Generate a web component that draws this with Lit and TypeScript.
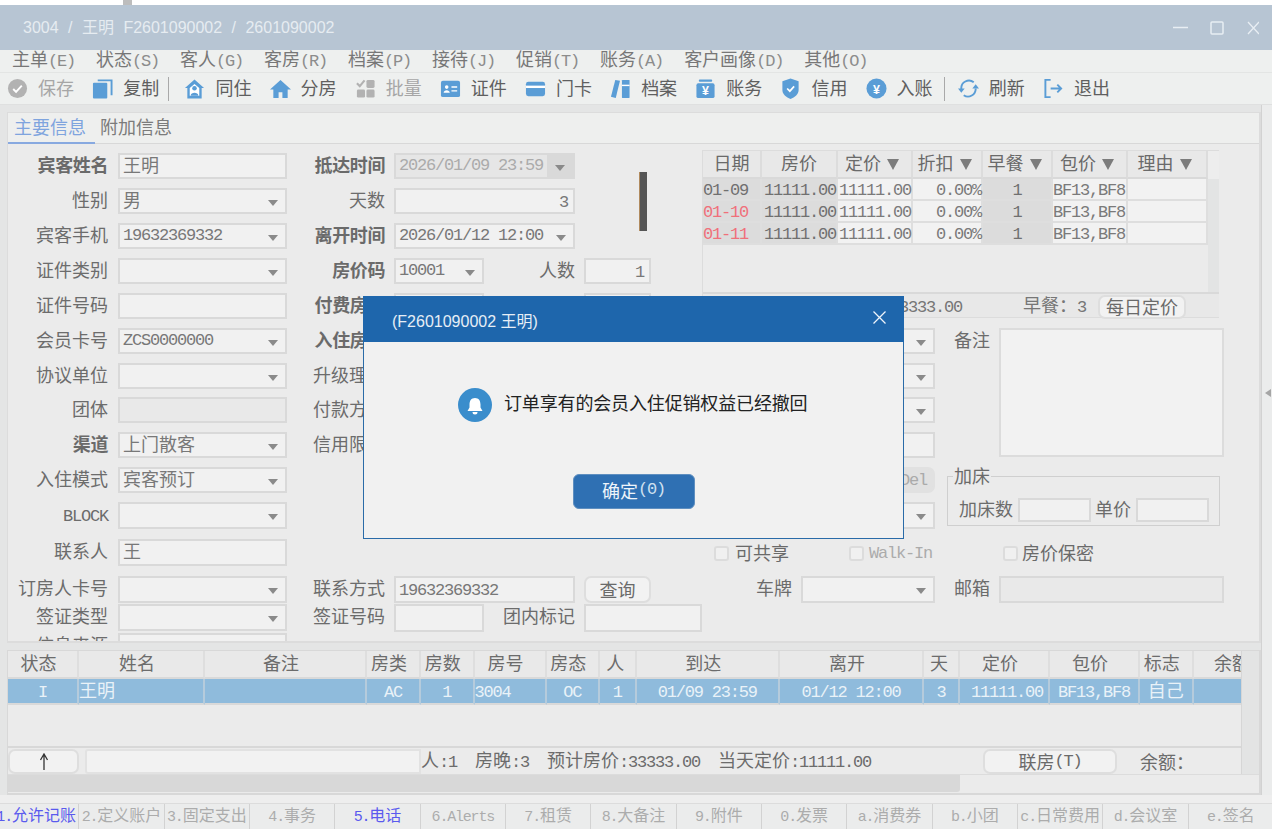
import { LitElement, html, css } from "lit";
import { customElement } from "lit/decorators.js";

const t = (s: string) =>
  s
    .split(/([\x20-\x7e]+)/)
    .filter(Boolean)
    .map((p) => (/^[\x20-\x7e]/.test(p) ? html`<span class="m">${p}</span>` : p));

const lbl = (s: string, b = false) => html`<span class="lb ${b ? "b" : ""}">${t(s)}</span>`;
const inp = (s = "", cls = "") => html`<div class="f ${cls}">${t(s)}</div>`;
const sel = (s = "", cls = "") => html`<div class="f sel ${cls}"><span class="v">${t(s)}</span><i class="ar"></i></div>`;

const B = "#5a9dd6";
const G = "#b2b2b2";
const icons: Record<string, unknown> = {
  save: html`<svg viewBox="0 0 22 22"><circle cx="11" cy="11" r="10" fill="${G}"/><path d="M6.5 11.5l3 3 6-6.5" fill="none" stroke="#fff" stroke-width="2"/></svg>`,
  copy: html`<svg viewBox="0 0 22 22"><path d="M6 2.5h14.500V18" fill="none" stroke="${B}" stroke-width="2"/><rect x="1" y="5" width="15" height="16.500" rx="1" fill="${B}"/></svg>`,
  share: html`<svg viewBox="0 0 22 22"><path d="M11 1.500l10 9h-2.500v11h-15v-11H1z" fill="${B}"/><path d="M6 10.500l5-4.200 5 4.200V18.500H6z" fill="#fff"/><circle cx="11" cy="10.800" r="2.400" fill="${B}"/><path d="M7 18.500c0-4 8-4 8 0z" fill="${B}"/></svg>`,
  home: html`<svg viewBox="0 0 22 22"><path d="M11 2L22 12h-3.500v9H13v-6H9v6H3.500v-9H0z" fill="${B}"/></svg>`,
  batch: html`<svg viewBox="0 0 22 22"><path d="M2 5.500l3 3 5-6" fill="none" stroke="${G}" stroke-width="2.200"/><rect x="12" y="2" width="8.500" height="8.500" rx="1.500" fill="${G}"/><rect x="2" y="12" width="8.500" height="8.500" rx="1.500" fill="${G}"/><rect x="12" y="12" width="8.500" height="8.500" rx="1.500" fill="${G}"/></svg>`,
  id: html`<svg viewBox="0 0 22 22"><rect x="1" y="3" width="20" height="17" rx="2" fill="${B}"/><circle cx="7" cy="9.500" r="1.900" fill="#fff"/><path d="M3.800 15.500c0-3.500 6.400-3.500 6.400 0z" fill="#fff"/><path d="M12 9.500h6M12 13.500h6" stroke="#fff" stroke-width="1.500"/></svg>`,
  card: html`<svg viewBox="0 0 22 22"><rect x="1" y="4" width="20" height="15" rx="2.500" fill="${B}"/><rect x="1" y="8" width="20" height="2.500" fill="#fff"/></svg>`,
  books: html`<svg viewBox="0 0 22 22"><path d="M5.500 2l5 1L6 21l-5-1.300z" fill="${B}"/><rect x="12.500" y="2" width="8" height="19" rx=".5" fill="${B}"/><rect x="12.500" y="7" width="8" height="1.500" fill="#fff"/></svg>`,
  jar: html`<svg viewBox="0 0 22 22"><rect x="4" y="1.500" width="14" height="2.500" rx="1" fill="${B}"/><rect x="1.500" y="5.500" width="19" height="15.500" rx="2" fill="${B}"/><text x="11" y="17.500" class="yen">¥</text></svg>`,
  shield: html`<svg viewBox="0 0 22 22"><path d="M11 .5l8.500 3v9c0 4.500-4 7.500-8.500 9.500-4.500-2-8.500-5-8.500-9.500v-9z" fill="${B}"/><path d="M7.500 11l2.800 2.800 4.500-5" fill="none" stroke="#fff" stroke-width="1.800"/></svg>`,
  coin: html`<svg viewBox="0 0 22 22"><circle cx="11" cy="11" r="10.500" fill="${B}"/><text x="11" y="16.500" class="yen">¥</text></svg>`,
  refresh: html`<svg viewBox="0 0 22 22"><path d="M3.500 11.500A8 8 0 0 1 16.500 4.500M18.500 11A8 8 0 0 1 6 18" fill="none" stroke="${B}" stroke-width="2"/><path d="M0 11h7l-3.500 4.500zM15 11h7l-3.500-4.500z" fill="${B}"/></svg>`,
  exit: html`<svg viewBox="0 0 22 22"><path d="M8 2H2.500v18H8" fill="none" stroke="${B}" stroke-width="2"/><path d="M8 11h11M15 7l4 4-4 4" fill="none" stroke="${B}" stroke-width="2"/></svg>`,
};

const menus = ["主单(E)", "状态(S)", "客人(G)", "客房(R)", "档案(P)", "接待(J)", "促销(T)", "账务(A)", "客户画像(D)", "其他(O)"];

const tools: [string, string, string?][] = [
  ["save", "保存", "off"],
  ["copy", "复制", "s1"],
  ["share", "同住"],
  ["home", "分房"],
  ["batch", "批量", "off"],
  ["id", "证件"],
  ["card", "门卡"],
  ["books", "档案"],
  ["jar", "账务"],
  ["shield", "信用"],
  ["coin", "入账", "s2"],
  ["refresh", "刷新"],
  ["exit", "退出"],
];

const rateRows = [
  ["01-09", false],
  ["01-10", true],
  ["01-11", true],
] as [string, boolean][];

const gridHead = ["状态", "姓名", "备注", "房类", "房数", "房号", "房态", "人", "到达", "离开", "天", "定价", "包价", "标志", "余额"];
const gridRow: [string, string?][] = [
  ["I"],
  ["王明", "l"],
  [""],
  ["AC"],
  ["1"],
  ["3004", "l"],
  ["OC"],
  ["1"],
  ["01/09 23:59"],
  ["01/12 12:00"],
  ["3"],
  ["11111.00", "r"],
  ["BF13,BF8"],
  ["自己"],
  [""],
];

const bottom: [string, boolean][] = [
  ["1.允许记账", true],
  ["2.定义账户", false],
  ["3.固定支出", false],
  ["4.事务", false],
  ["5.电话", true],
  ["6.Alerts", false],
  ["7.租赁", false],
  ["8.大备注", false],
  ["9.附件", false],
  ["0.发票", false],
  ["a.消费券", false],
  ["b.小团", false],
  ["c.日常费用", false],
  ["d.会议室", false],
  ["e.签名", false],
];

@customElement("app-root")
export class AppRoot extends LitElement {
  static styles = css`
    :host {
      display: block;
      width: 1272px;
      height: 829px;
      overflow: hidden;
      background: #e4e5e5;
      color: #6c6c6c;
      font-family: "Noto Sans CJK SC", "Liberation Sans", sans-serif;
      font-size: 18px;
      line-height: 26px;
    }
    * { box-sizing: border-box; }
    .m {
      font-family: "Liberation Mono", monospace;
      font-size: 17px;
      letter-spacing: -1.2px;
      white-space: pre;
    }
    .top { height: 5px; background: #fff; }
    .top i { display: block; margin-left: 123px; width: 9px; height: 5px; background: #bdbdbd; }
    .title {
      height: 45px;
      background: #b7c5d3;
      color: #e6ecf1;
      display: flex;
      align-items: center;
      justify-content: space-between;
      padding: 0 13px 0 23px;
      font-family: "Liberation Sans", "Noto Sans CJK SC", sans-serif;
      font-size: 16px;
      word-spacing: 5px;
      white-space: pre;
    }
    .title svg { width: 86px; height: 14px; }
    .menu {
      height: 22px;
      background: #eef0ef;
      display: flex;
      gap: 21px;
      padding-left: 12px;
      line-height: 16px;
      color: #777;
      white-space: nowrap;
    }
    .menu .m { color: #8c8c8c; }
    .tools {
      height: 33px;
      background: #eef0ef;
      border-top: 1px solid #e3e5e4;
      border-bottom: 1px solid #dfe0e0;
      display: flex;
      align-items: center;
      gap: 17.15px;
      padding-left: 7px;
      white-space: nowrap;
      color: #5f5f5f;
    }
    .tool { display: flex; align-items: center; gap: 10px; width: 68px; }
    .tool svg { width: 21px; height: 21px; flex: none; }
    .tool span { margin-top: -4px; }
    .tool.off { color: #a6a6a6; }
    .yen { fill: #fff; font: 700 13px "Liberation Sans", sans-serif; text-anchor: middle; }
    .sep { width: 1px; height: 24px; background: #a9a9a9; }
    .sep.a { margin: 0 -2px 0 -9px; }
    .sep.b { margin: 0 -4px 0 -7px; }

    .body { height: 690px; display: flex; }
    .panels { width: 1261px; padding: 7px 0 0 7px; }
    .strip {
      width: 11px;
      background: #ebecec;
      border-left: 1px solid #d2d2d2;
      display: flex;
      align-items: center;
      padding-bottom: 115px;
      padding-left: 3px;
    }
    .strip i {
      width: 0;
      height: 0;
      border-style: solid;
      border-width: 4px 6px 4px 0;
      border-color: transparent #a5a5a5 transparent transparent;
    }
    .main {
      height: 531px;
      background: #ebebeb;
      border: 1px solid #dcdcdc;
      border-bottom-width: 2px;
      border-right-width: 2px;
      overflow: hidden;
    }
    .tabs {
      height: 31px;
      display: flex;
      border-bottom: 1px solid #d8d8d8;
      background: #eeefee;
      line-height: 27px;
    }
    .tab { padding: 0 5px; color: #7b7b7b; white-space: nowrap; }
    .tab.on { color: #7fa4de; border-bottom: 2px solid #88a9e0; height: 31px; padding: 0 9px 0 6px; }
    .form { height: 497px; display: flex; overflow: hidden; }
    .col1 { width: 279px; flex: none; padding-top: 9px; }
    .col2 { width: 415px; flex: none; padding-top: 9px; }
    .col3 { flex: 1; padding-top: 6px; }

    .row { height: 35px; display: flex; align-items: flex-start; gap: 9px; }
    .row.h34 { height: 34px; }
    .row.h37 { height: 37px; }
    .row.h28 { height: 28px; }
    .row.h29 { height: 29px; }
    .row.tall .f { height: 27px; }
    .row.tall2 .f { height: 28px; }
    .col1 .row { gap: 10px; }
    .col1 .lb { width: 100px; }
    .col2 .lb.first { width: 98px; }
    .lb { text-align: right; flex: none; white-space: nowrap; line-height: 23px; }
    .lb.b { font-weight: 700; color: #6a6a6a; letter-spacing: -0.4px; }
    .lb.m2 { width: 91px; margin-left: -9px; }
    .f {
      height: 26px;
      background: #f1f1f1;
      border: 2px solid #d9d9d9;
      color: #787878;
      padding: 0 3px;
      line-height: 18px;
      white-space: nowrap;
      flex: none;
    }
    .w169 { width: 169px; }
    .w181 { width: 181px; }
    .w90 { width: 90px; }
    .w67 { width: 67px; }
    .w118 { width: 118px; }
    .w134 { width: 134px; }
    .w225 { width: 225px; }
    .w73 { width: 73px; }
    .r { text-align: right; padding-right: 5px; }
    .dis { background: #e9e9e9; }
    .sel { display: flex; align-items: center; justify-content: space-between; padding-right: 7px; }
    .sel .v { margin-top: -4px; }
    .ar {
      width: 0;
      height: 0;
      flex: none;
      margin-top: 3px;
      border-style: solid;
      border-width: 6px 5.5px 0 5.5px;
      border-color: #8a8a8a transparent transparent transparent;
    }
    .date { background: #e6e6e6; color: #ababab; padding-right: 0; }
    .date .cap {
      width: 26px;
      height: 22px;
      background: #d9d9d9;
      display: flex;
      align-items: center;
      justify-content: center;
    }
    .bar { width: 8px; height: 59px; background: #555; margin: 19px 0 0 55px; flex: none; border-left: 1px solid #b08a5e; }

    .rate { width: 517px; height: 168px; border: 1px solid #dcdcdc; border-right: none; display: flex; flex-direction: column; }
    .rate-top { flex: 1; display: flex; }
    .rate-main { width: 505px; }
    .rate-sb { width: 12px; display: flex; flex-direction: column; }
    .rate-sb i { display: block; height: 28px; background: #ededed; }
    .rate-sb b { display: block; flex: 1; background: #e3e4e4; }
    .rtr { display: grid; grid-template-columns: 59px 76px 75px 70px 70px 75px 80px; }
    .rth {
      height: 28px;
      background: #e8e8e8;
      border-right: 2px solid #dcdcdc;
      border-bottom: 2px solid #d9d9d9;
      display: flex;
      align-items: center;
      justify-content: center;
      gap: 6px;
      color: #6a6a6a;
      line-height: 21px;
    }
    .rth.fl { padding-right: 5px; }
    .rth span { margin-top: -3px; }
    .fil {
      width: 0;
      height: 0;
      border-style: solid;
      border-width: 11px 6.5px 0 6.5px;
      border-color: #7c7c7c transparent transparent transparent;
    }
    .rtd {
      height: 22px;
      background: #f2f2f2;
      border-right: 2px solid #dedede;
      border-bottom: 2px solid #dedede;
      line-height: 17px;
      color: #7a7a7a;
      white-space: nowrap;
      text-align: center;
    }
    .rtd.g { background: #dcdcdc; color: #707070; }
    .rtd.red { color: #f0707a; }
    .rtd.ra { text-align: right; }
    .rtd.la { text-align: left; }
    .rate-foot {
      height: 25px;
      border-top: 2px solid #d9d9d9;
      display: flex;
      align-items: center;
      justify-content: flex-end;
      padding-right: 33px;
      white-space: nowrap;
      background: #e8e8e8;
      color: #767676;
    }
    .btn {
      background: #f2f2f2;
      border: 2px solid #dedede;
      border-radius: 7px;
      display: flex;
      align-items: center;
      justify-content: center;
      flex: none;
      color: #6a6a6a;
      line-height: 19px;
      white-space: nowrap;
    }
    .btn27 { height: 27px; }
    .rate-foot .btn { width: 88px; height: 24px; margin: 2px 0 0 12px; }
    .rate-foot .val { margin-right: 61px; }

    .lower { display: flex; margin-top: 10px; gap: 12px; }
    .ll { width: 233px; flex: none; }
    .ll .row { justify-content: flex-end; }
    .ll .row.start { justify-content: flex-start; padding: 7px 0 0 12px; gap: 6px; }
    .rl { width: 277px; flex: none; }
    .rl .row { padding-left: 7px; }
    .rl .row.ckr { padding-top: 7px; gap: 4px; }
    .h139 { height: 139px !important; }
    .ta { width: 225px; height: 129px; background: #f2f2f2; border: 2px solid #dcdcdc; flex: none; }
    .del { background: #e1e1e1; border-color: #e1e1e1; color: #aaa; width: 134px; height: 26px; justify-content: flex-end; padding-right: 6px; }
    .rl .fsw { height: 72px; }
    fieldset {
      margin: 0 0 0 -7px;
      width: 273px;
      height: 59px;
      border: 1px solid #cfcfcf;
      padding: 13px 0 0 11px;
      display: flex;
      gap: 5px;
      align-items: flex-start;
    }
    legend { padding: 0 1px; margin-left: -6px; line-height: 16px; height: 18px; color: #6a6a6a; }
    .fs { display: flex; gap: 5px; height: 24px; line-height: 21px; }
    .fs .f { height: 24px; }
    .fs .sp { margin-left: -1px; }
    .ck { width: 15px; height: 15px; background: #f0f0f0; border: 2px solid #dcdcdc; border-radius: 3px; flex: none; }
    .cktxt { line-height: 12px; white-space: nowrap; color: #6a6a6a; }
    .cktxt.off { color: #ababab; margin-left: -1px; line-height: 9px; }
    .sp60 { margin-left: 54px; }
    .ml49 { margin-left: 49px; }

    .grid {
      margin-top: 7px;
      height: 145px;
      border: 1px solid #d8d8d8;
      border-bottom-width: 2px;
      border-right-width: 2px;
      background: #ebebeb;
    }
    .g-up { display: flex; height: 123px; }
    .g-main { width: 1233px; flex: none; overflow-x: clip; }
    .g-sb { width: 18px; background: #e3e4e4; border-left: 1px solid #d6d6d6; }
    .gtr { display: grid; width: 1264px; grid-template-columns: 71px 126px 162px 54px 53.5px 72px 53.500px 36.500px 143.500px 144px 36px 90px 90px 53.500px 79px; }
    .gth {
      height: 28px;
      background: #e9e9e9;
      border-right: 2px solid #dedede;
      border-bottom: 2px solid #d9d9d9;
      line-height: 22px;
      text-align: center;
      white-space: nowrap;
      padding-right: 8px;
    }
    .gtr .gth:nth-child(8), .gtr .gth:nth-child(11) { padding-right: 4px; }
    .gtr .gth:nth-child(15) { padding-right: 0; }
    .gtd {
      height: 26px;
      background: #8fbbdc;
      color: #e9f2f8;
      border-right: 2px solid #b5cbdc;
      border-bottom: 2px solid #d9d9d9;
      line-height: 21px;
      text-align: center;
      white-space: nowrap;
    }
    .gtd.l { text-align: left; }
    .gtd.r { text-align: right; }
    .g-blank { height: 43px; border-bottom: 2px solid #d8d8d8; }
    .g-bar { height: 26px; display: flex; align-items: center; white-space: nowrap; color: #6c6c6c; line-height: 23px; }
    .g-bar .up { width: 71px; height: 25px; }
    .g-bar .up svg { width: 12px; height: 17px; }
    .g-bar .box { width: 336px; height: 25px; margin: 0 0 0 6px; background: #f2f2f2; border: 2px solid #e2e2e2; border-radius: 3px 0 0 3px; }
    .stats { display: flex; gap: 18px; }
    .g-bar .join { width: 134px; height: 25px; margin-left: 112px; }
    .g-bar .bal { margin-left: 23px; }
    .hs { height: 18px; display: flex; border-top: 1px solid #dcdcdc; }
    .hs i { display: block; width: 952px; background: #d8d8d8; border-radius: 0 0 3px 0; }
    .band { height: 8px; background: #eeeeee; }
    .btabs {
      height: 26px;
      width: 1280px;
      margin-left: -6px;
      display: grid;
      grid-template-columns: repeat(15, 1fr);
      background: #ebecec;
      border-top: 1px solid #dcdcdc;
    }
    .bt {
      border-right: 1px solid #d2d2d2;
      font-size: 16px;
      line-height: 21px;
      text-align: center;
      color: #acacac;
      white-space: nowrap;
    }
    .bt.on { color: #5a5aee; }
    .bt .m { font-size: 15px; }

    .dialog {
      position: absolute;
      left: 363px;
      top: 296px;
      width: 541px;
      height: 243px;
      background: #f1f1f1;
      border: 1px solid #2a6ba8;
      border-top: none;
      display: flex;
      flex-direction: column;
    }
    .d-h {
      height: 46px;
      margin: 0 -1px;
      flex: none;
      background: #1e66ac;
      color: #e6eef6;
      display: flex;
      align-items: center;
      justify-content: space-between;
      padding: 6px 18px 0 29px;
      font-family: "Liberation Sans", "Noto Sans CJK SC", sans-serif;
      font-size: 16px;
      white-space: pre;
    }
    .d-h svg { width: 13px; height: 13px; margin-bottom: 10px; }
    .d-m {
      display: flex;
      align-items: center;
      gap: 12px;
      margin: 46px 0 0 94px;
      height: 34px;
      color: #222;
      white-space: nowrap;
    }
    .d-m svg { width: 34px; height: 34px; flex: none; }
    .d-m span.tx { margin-top: -6px; letter-spacing: -0.15px; }
    .d-b {
      margin: 52px auto 0;
      width: 122px;
      height: 35px;
      background: #2f70b3;
      border: 1px solid #5f8fc0;
      border-radius: 6px;
      color: #eef4fa;
      display: flex;
      align-items: center;
      justify-content: center;
      padding-bottom: 3px;
    }
    .d-b .m { color: #cfe0f0; }
    .root { position: relative; width: 1272px; height: 829px; overflow: hidden; }
  `;

  render() {
    return html`<div class="root">
      <div class="top"><i></i></div>
      <div class="title">
        <span>3004 / 王明 F2601090002 / 2601090002</span>
        <svg viewBox="0 0 86 14"><path d="M0 6.500h15" stroke="#e8eef3" stroke-width="1.500"/><rect x="38" y="1" width="12" height="12" rx="1" fill="none" stroke="#e8eef3" stroke-width="1.500"/><path d="M75 1l11 12M86 1L75 13" stroke="#e8eef3" stroke-width="1.300"/></svg>
      </div>
      <div class="menu">${menus.map((m) => html`<span>${t(m)}</span>`)}</div>
      <div class="tools">
        ${tools.map(
          ([i, l, c]) => html`<div class="tool ${c === "off" ? "off" : ""}">${icons[i]}<span>${l}</span></div>
            ${c === "s1" ? html`<div class="sep a"></div>` : ""}${c === "s2" ? html`<div class="sep b"></div>` : ""}`
        )}
      </div>
      <div class="body">
        <div class="panels">
          <div class="main">
            <div class="tabs"><div class="tab on">主要信息</div><div class="tab">附加信息</div></div>
            <div class="form">
              <div class="col1">
                <div class="row">${lbl("宾客姓名", true)}${inp("王明", "w169")}</div>
                <div class="row">${lbl("性别")}${sel("男", "w169")}</div>
                <div class="row">${lbl("宾客手机")}${sel("19632369332", "w169")}</div>
                <div class="row">${lbl("证件类别")}${sel("", "w169")}</div>
                <div class="row">${lbl("证件号码")}${inp("", "w169")}</div>
                <div class="row">${lbl("会员卡号")}${sel("ZCS0000000", "w169")}</div>
                <div class="row h34">${lbl("协议单位")}${sel("", "w169")}</div>
                <div class="row">${lbl("团体")}${inp("", "w169 dis")}</div>
                <div class="row">${lbl("渠道", true)}${sel("上门散客", "w169")}</div>
                <div class="row">${lbl("入住模式")}${sel("宾客预订", "w169")}</div>
                <div class="row h37 tall">${lbl("BLOCK")}${sel("", "w169")}</div>
                <div class="row h37 tall">${lbl("联系人")}${inp("王", "w169")}</div>
                <div class="row h28 tall">${lbl("订房人卡号")}${sel("", "w169")}</div>
                <div class="row h29 tall">${lbl("签证类型")}${sel("", "w169")}</div>
                <div class="row tall">${lbl("信息来源")}${inp("", "w169")}</div>
              </div>
              <div class="col2">
                <div class="row">
                  <span class="lb b first">抵达时间</span>
                  <div class="f sel date w181"><span class="v">${t("2026/01/09 23:59")}</span><span class="cap"><i class="ar"></i></span></div>
                  <div class="bar"></div>
                </div>
                <div class="row"><span class="lb first">天数</span>${inp("3", "w181 r")}</div>
                <div class="row"><span class="lb b first">离开时间</span>${sel("2026/01/12 12:00", "w181")}</div>
                <div class="row"><span class="lb b first">房价码</span>${sel("10001", "w90")}<span class="lb m2">人数</span>${inp("1", "w67 r")}</div>
                <div class="row"><span class="lb b first">付费房价</span>${inp("", "w90")}<span class="lb m2">儿童</span>${inp("", "w67 r")}</div>
                <div class="row"><span class="lb b first">入住房型</span>${sel("", "w181")}</div>
                <div class="row h34"><span class="lb first">升级理由</span>${sel("", "w181")}</div>
                <div class="row"><span class="lb first">付款方式</span>${sel("", "w181")}</div>
                <div class="row"><span class="lb first">信用限额</span>${inp("", "w181")}</div>
                <div class="row"></div>
                <div class="row h37"></div>
                <div class="row h37"></div>
                <div class="row h28 tall"><span class="lb first">联系方式</span>${inp("19632369332", "w181")}<div class="btn w67 btn27">查询</div></div>
                <div class="row h29 tall2"><span class="lb first">签证号码</span>${inp("", "w90")}<span class="lb m2">团内标记</span>${inp("", "w118")}</div>
              </div>
              <div class="col3">
                <div class="rate">
                  <div class="rate-top">
                    <div class="rate-main">
                      <div class="rtr">
                        <div class="rth"><span>日期</span></div>
                        <div class="rth"><span>房价</span></div>
                        ${["定价", "折扣", "早餐", "包价", "理由"].map((h) => html`<div class="rth fl"><span>${h}</span><i class="fil"></i></div>`)}
                      </div>
                      ${rateRows.map(
                        ([d, red]) => html`<div class="rtr">
                          <div class="rtd g la ${red ? "red" : ""}"><span class="m">${d}</span></div>
                          <div class="rtd g ra">${t("11111.00")}</div>
                          <div class="rtd ra">${t("11111.00")}</div>
                          <div class="rtd ra">${t("0.00%")}</div>
                          <div class="rtd g">${t("1")}</div>
                          <div class="rtd la">${t("BF13,BF8")}</div>
                          <div class="rtd"></div>
                        </div>`
                      )}
                    </div>
                    <div class="rate-sb"><i></i><b></b></div>
                  </div>
                  <div class="rate-foot">
                    <span class="val">${t("预计房价:33333.00")}</span>
                    <span>早餐：${t("3")}</span>
                    <div class="btn">每日定价</div>
                  </div>
                </div>
                <div class="lower">
                  <div class="ll">
                    <div class="row">${sel("", "w134")}</div>
                    <div class="row h34">${sel("", "w134")}</div>
                    <div class="row">${sel("", "w134")}</div>
                    <div class="row">${inp("", "w134")}</div>
                    <div class="row"><div class="btn del">${t("Del")}</div></div>
                    <div class="row h37 tall">${sel("", "w134")}</div>
                    <div class="row h37 start">
                      <i class="ck"></i><span class="cktxt">可共享</span>
                      <i class="ck sp60"></i><span class="cktxt off">${t("Walk-In")}</span>
                    </div>
                    <div class="row tall">${lbl("车牌")}<div class="f sel w134"><span class="v"></span><i class="ar"></i></div></div>
                  </div>
                  <div class="rl">
                    <div class="row h139">${lbl("备注")}<div class="ta"></div></div>
                    <div class="row fsw">
                      <fieldset>
                        <legend>加床</legend>
                        <div class="fs"><span>加床数</span>${inp("", "w73")}<span class="sp">单价</span>${inp("", "w73")}</div>
                      </fieldset>
                    </div>
                    <div class="row h37 ckr"><i class="ck ml49"></i><span class="cktxt">房价保密</span></div>
                    <div class="row tall">${lbl("邮箱")}${inp("", "w225 dis")}</div>
                  </div>
                </div>
              </div>
            </div>
          </div>
          <div class="grid">
            <div class="g-up">
              <div class="g-main">
                <div class="gtr">${gridHead.map((h) => html`<div class="gth">${h}</div>`)}</div>
                <div class="gtr">${gridRow.map(([v, c]) => html`<div class="gtd ${c ?? ""}">${t(v)}</div>`)}</div>
                <div class="g-blank"></div>
                <div class="g-bar">
                  <div class="btn up"><svg viewBox="0 0 12 17"><path d="M6 17V2M2.500 7L6 1l3.500 6" fill="none" stroke="#333" stroke-width="1.300"/></svg></div>
                  <div class="box"></div>
                  <div class="stats">
                    <span>${t("人:1")}</span>
                    <span>${t("房晚:3")}</span>
                    <span>${t("预计房价:33333.00")}</span>
                    <span>${t("当天定价:11111.00")}</span>
                  </div>
                  <div class="btn join">${t("联房(T)")}</div>
                  <span class="bal">余额：</span>
                </div>
              </div>
              <div class="g-sb"></div>
            </div>
            <div class="hs"><i></i></div>
          </div>
        </div>
        <div class="strip"><i></i></div>
      </div>
      <div class="band"></div>
      <div class="btabs">${bottom.map(([l, on]) => html`<div class="bt ${on ? "on" : ""}">${t(l)}</div>`)}</div>
      <div class="dialog">
        <div class="d-h">
          <span>(F2601090002 王明)</span>
          <svg viewBox="0 0 13 13"><path d="M.5.5l12 12M12.500.5l-12 12" stroke="#eef4fa" stroke-width="1.300"/></svg>
        </div>
        <div class="d-m">
          <svg viewBox="0 0 34 34"><circle cx="17" cy="17" r="17" fill="#3a8dcc"/><path d="M17 10c-3.800 0-5.500 2.800-5.500 6.500v3L9.500 23h15l-2-3.500v-3c0-3.700-1.700-6.500-5.500-6.500z" fill="#fff"/><path d="M14.500 24a2.500 2.500 0 0 0 5 0z" fill="#fff"/></svg>
          <span class="tx">订单享有的会员入住促销权益已经撤回</span>
        </div>
        <div class="d-b">确定<span class="m">(0)</span></div>
      </div>
    </div>`;
  }
}
